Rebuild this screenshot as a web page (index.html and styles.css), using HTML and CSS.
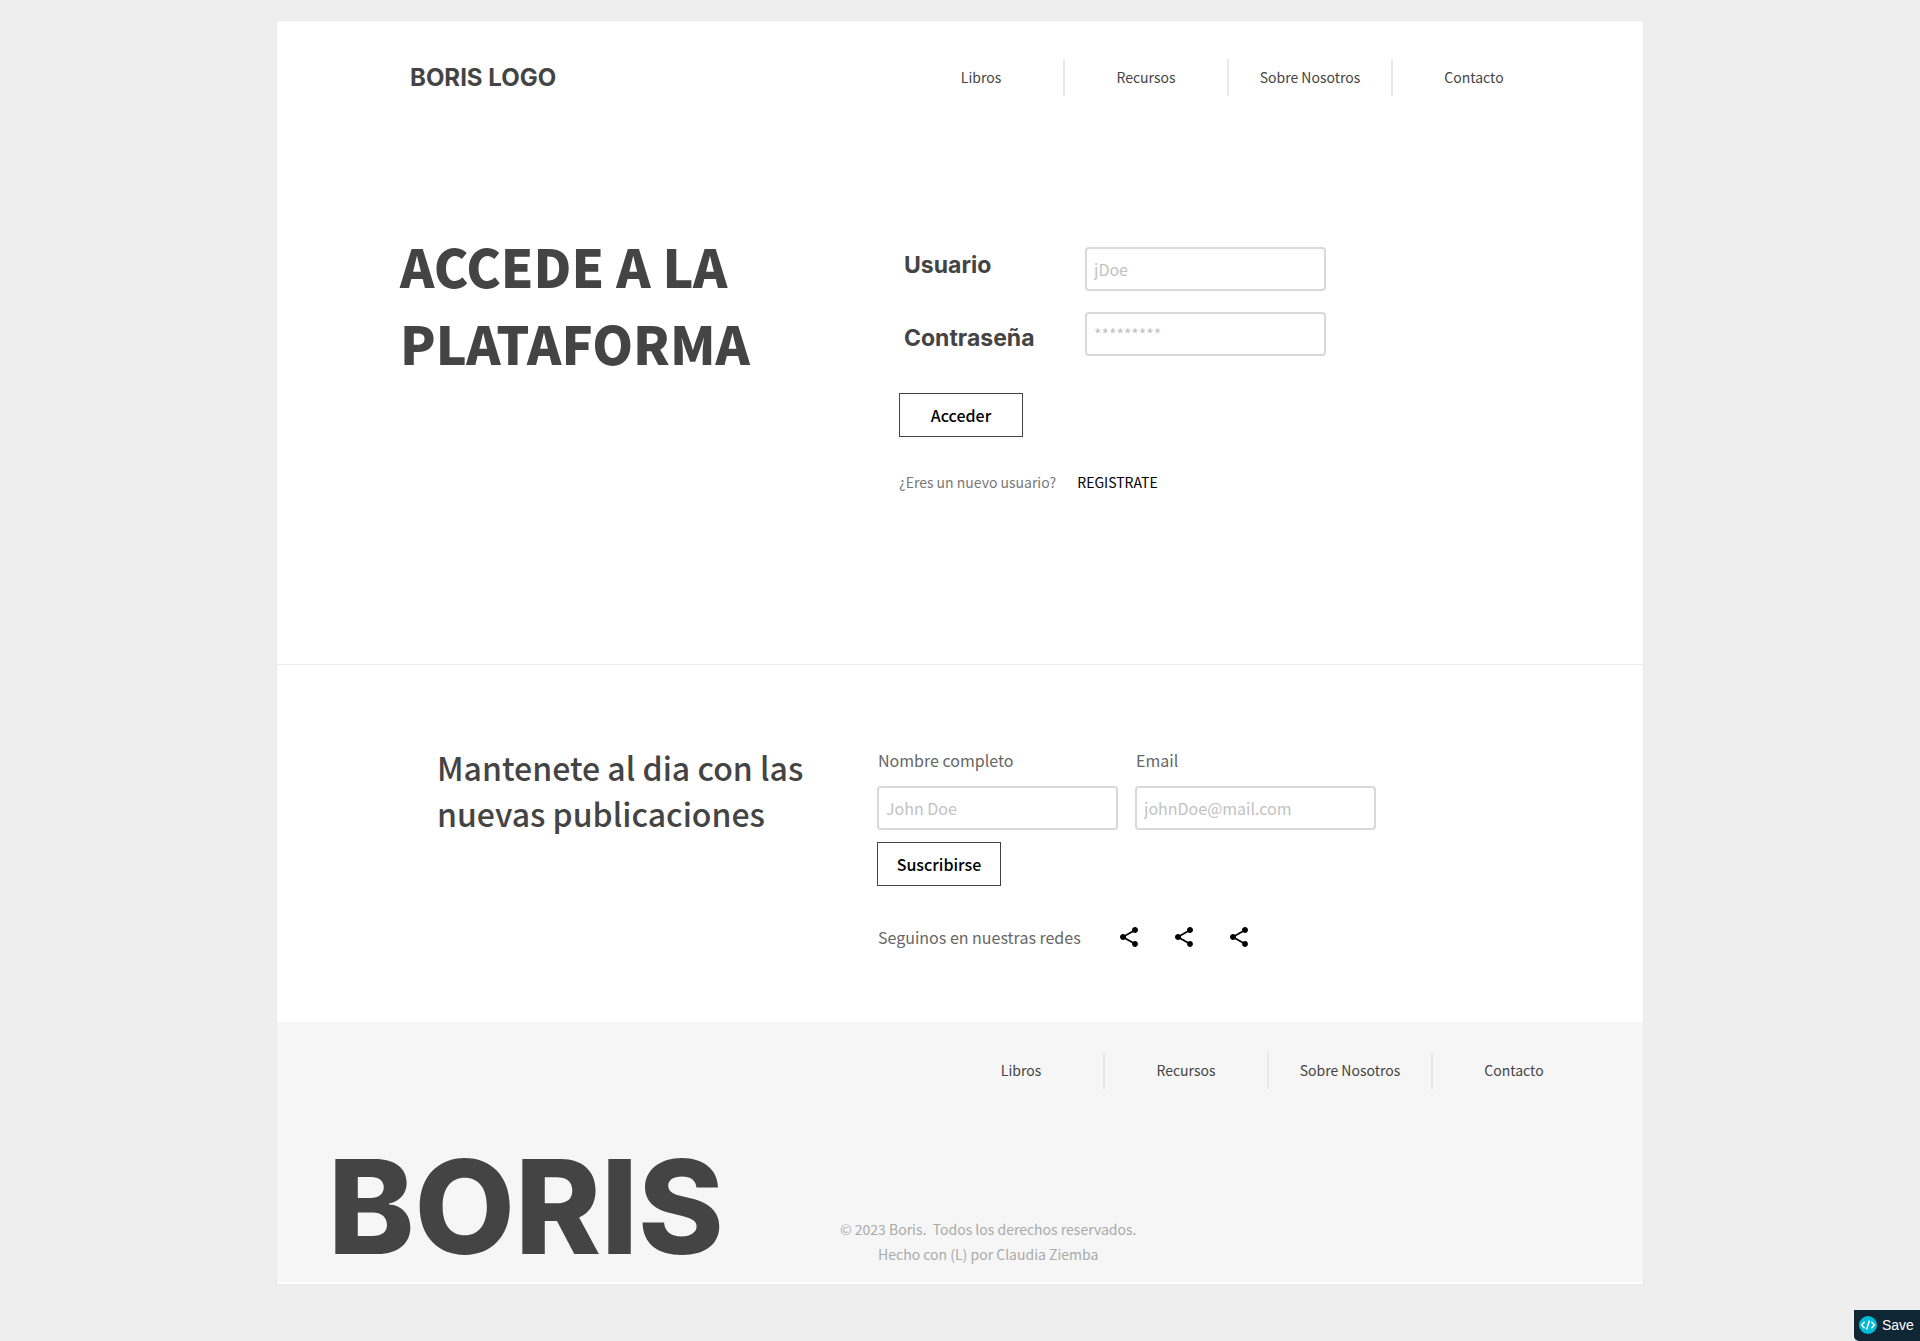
FILE: index.html
```html
<!DOCTYPE html>
<html lang="es">
<head>
<meta charset="utf-8">
<meta name="viewport" content="width=device-width, initial-scale=1">
<title>Boris - Acceso</title>
<link rel="stylesheet" href="styles.css">
</head>
<body>
<svg class="sprite" aria-hidden="true">
  <symbol id="share" viewBox="0 0 24 24"><path d="M18 16.08c-.76 0-1.44.3-1.96.77L8.91 12.7c.05-.23.09-.46.09-.7s-.04-.47-.09-.7l7.05-4.11c.54.5 1.25.81 2.04.81 1.66 0 3-1.34 3-3s-1.34-3-3-3-3 1.34-3 3c0 .24.04.47.09.7L8.04 9.81C7.5 9.31 6.79 9 6 9c-1.66 0-3 1.34-3 3s1.34 3 3 3c.79 0 1.5-.31 2.04-.81l7.12 4.16c-.05.21-.08.43-.08.65 0 1.61 1.31 2.92 2.92 2.92s2.92-1.31 2.92-2.92-1.31-2.92-2.92-2.92z"/></symbol>
</svg>
<div class="page">
  <header class="header">
    <a class="logo" href="#">BORIS LOGO</a>
    <nav class="nav" aria-label="Principal">
      <a href="#">Libros</a>
      <a href="#">Recursos</a>
      <a href="#">Sobre Nosotros</a>
      <a href="#">Contacto</a>
    </nav>
  </header>

  <main>
    <section class="login">
      <h1 class="title">ACCEDE A LA<br>PLATAFORMA</h1>
      <form class="login-form">
        <div class="credentials">
          <div class="credential-labels">
            <label for="user">Usuario</label>
            <label for="password">Contraseña</label>
          </div>
          <div class="credential-fields">
            <input class="field" id="user" type="text" placeholder="jDoe">
            <input class="field" id="password" type="password" placeholder="*********">
          </div>
        </div>
        <button class="button" type="submit">Acceder</button>
        <p class="signup">¿Eres un nuevo usuario? <a href="#">REGISTRATE</a></p>
      </form>
    </section>

    <section class="news">
      <h2 class="subtitle">Mantenete al dia con las<br>nuevas publicaciones</h2>
      <div>
        <form class="news-form">
          <div class="news-fields">
            <div class="news-field">
              <label for="name">Nombre completo</label>
              <input class="field" id="name" type="text" placeholder="John Doe">
            </div>
            <div class="news-field">
              <label for="email">Email</label>
              <input class="field" id="email" type="email" placeholder="johnDoe@mail.com">
            </div>
          </div>
          <button class="button" type="submit">Suscribirse</button>
        </form>
        <div class="social">
          <span>Seguinos en nuestras redes</span>
          <div class="social-links">
            <a href="#" aria-label="Red 1"><svg><use href="#share"/></svg></a>
            <a href="#" aria-label="Red 2"><svg><use href="#share"/></svg></a>
            <a href="#" aria-label="Red 3"><svg><use href="#share"/></svg></a>
          </div>
        </div>
      </div>
    </section>
  </main>

  <footer class="footer">
    <nav class="nav" aria-label="Pie de página">
      <a href="#">Libros</a>
      <a href="#">Recursos</a>
      <a href="#">Sobre Nosotros</a>
      <a href="#">Contacto</a>
    </nav>
    <div class="footer-bottom">
      <div class="wordmark">BORIS</div>
      <p class="copyright">© 2023 Boris.&nbsp; Todos los derechos reservados.<br>Hecho con (L) por Claudia Ziemba</p>
    </div>
  </footer>
</div>
<button class="save" type="button">
  <svg viewBox="0 0 18 18" aria-hidden="true"><circle cx="9" cy="9" r="9" fill="#00bcd9"/><path d="M5.6 5.8 2.6 9l3 3.2M12.4 5.8l3 3.2-3 3.2M10.4 4.6 7.6 13.4" fill="none" stroke="#fff" stroke-width="1.5"/></svg>
  Save
</button>
</body>
</html>
```
FILE: styles.css
```css
* {
  box-sizing: border-box;
}

body {
  margin: 0;
  padding: 20px 16px 48px;
  background: #eee;
  color: #444;
  font-family: "Noto Sans CJK SC", "Noto Sans", sans-serif;
  font-size: 16px;
  line-height: 24px;
}

h1,
h2,
p {
  margin: 0;
}

a {
  color: inherit;
  text-decoration: none;
}

.sprite {
  display: none;
}

.page {
  max-width: 1368px;
  margin: 0 auto;
  padding-bottom: 2px;
  border: 1px solid #ebebeb;
  background: #fff;
}

.header {
  display: flex;
  justify-content: space-between;
  align-items: center;
  padding: 38px 88px 0 133px;
}

.logo {
  font-family: Inter, sans-serif;
  font-size: 24px;
  font-weight: 700;
}

.nav {
  display: grid;
  grid-template-columns: repeat(4, 164px);
  justify-content: end;
  font-size: 14px;
  line-height: 37px;
  text-align: center;
}

.nav a + a {
  border-left: 2px solid #e8e8e8;
}

.login,
.news {
  display: grid;
  align-items: start;
}

.login {
  grid-template-columns: 499px 1fr;
  padding: 131px 0 170px 123px;
  border-bottom: 1px solid #eaeaea;
}

.title {
  font-size: 52px;
  font-weight: 900;
  line-height: 77px;
}

.login-form {
  padding-top: 20px;
}

.credentials {
  display: flex;
}

.credential-labels {
  display: grid;
  grid-auto-rows: 73px;
  width: 186px;
  padding-left: 5px;
  font-family: Inter, sans-serif;
  font-size: 23px;
  font-weight: 700;
  line-height: 36px;
}

.credential-fields {
  display: flex;
  flex-direction: column;
  gap: 21px;
}

.field {
  display: block;
  width: 241px;
  height: 44px;
  padding: 0 7px;
  border: 2px solid #d9d9d9;
  border-radius: 4px;
  background: #fff;
  color: #444;
  font: inherit;
}

.field::placeholder {
  color: #c2c2c2;
  opacity: 1;
}

.button {
  display: block;
  width: 124px;
  height: 44px;
  padding: 0;
  border: 1px solid #444;
  background: #fff;
  color: #000;
  font: inherit;
  font-weight: 500;
}

.signup {
  padding-top: 33px;
  color: #777;
  font-size: 14px;
}

.signup a {
  margin-left: 18px;
  color: #000;
}

.news {
  grid-template-columns: 440px 1fr;
  padding: 79px 0 73px 160px;
}

.subtitle {
  font-size: 32px;
  font-weight: 500;
  line-height: 46px;
}

.news-fields {
  display: flex;
  gap: 17px;
  padding-top: 4px;
  margin-bottom: 12px;
  color: #666;
}

.news-field {
  display: grid;
  gap: 14px;
}

.news-field label {
  padding-left: 1px;
}

.social {
  display: flex;
  align-items: center;
  gap: 36px;
  padding: 39px 0 0 1px;
  color: #666;
}

.social-links {
  display: flex;
  gap: 31px;
  color: #000;
}

.social svg {
  display: block;
  width: 24px;
  height: 24px;
  fill: currentColor;
}

.footer {
  padding: 30px 0 0;
  background: #f6f6f6;
}

.footer .nav {
  padding-right: 48px;
}

.footer-bottom {
  display: flex;
  align-items: flex-end;
  padding: 47px 0 4px 51px;
}

.wordmark {
  width: 512px;
  font-family: Inter, sans-serif;
  font-size: 130px;
  font-weight: 800;
  line-height: 142px;
}

.copyright {
  padding-bottom: 11px;
  color: #aaa;
  font-size: 14px;
  line-height: 25px;
  text-align: center;
}

.save {
  position: fixed;
  right: 0;
  bottom: 0;
  display: flex;
  align-items: center;
  gap: 5px;
  width: 66px;
  height: 31px;
  padding: 0 5px 2px;
  border: 0;
  border-radius: 0 0 0 5px;
  background: #0f2634;
  color: #fff;
  font: 14px "Liberation Sans", sans-serif;
}

.save svg {
  flex: none;
  width: 18px;
  height: 18px;
}
```
